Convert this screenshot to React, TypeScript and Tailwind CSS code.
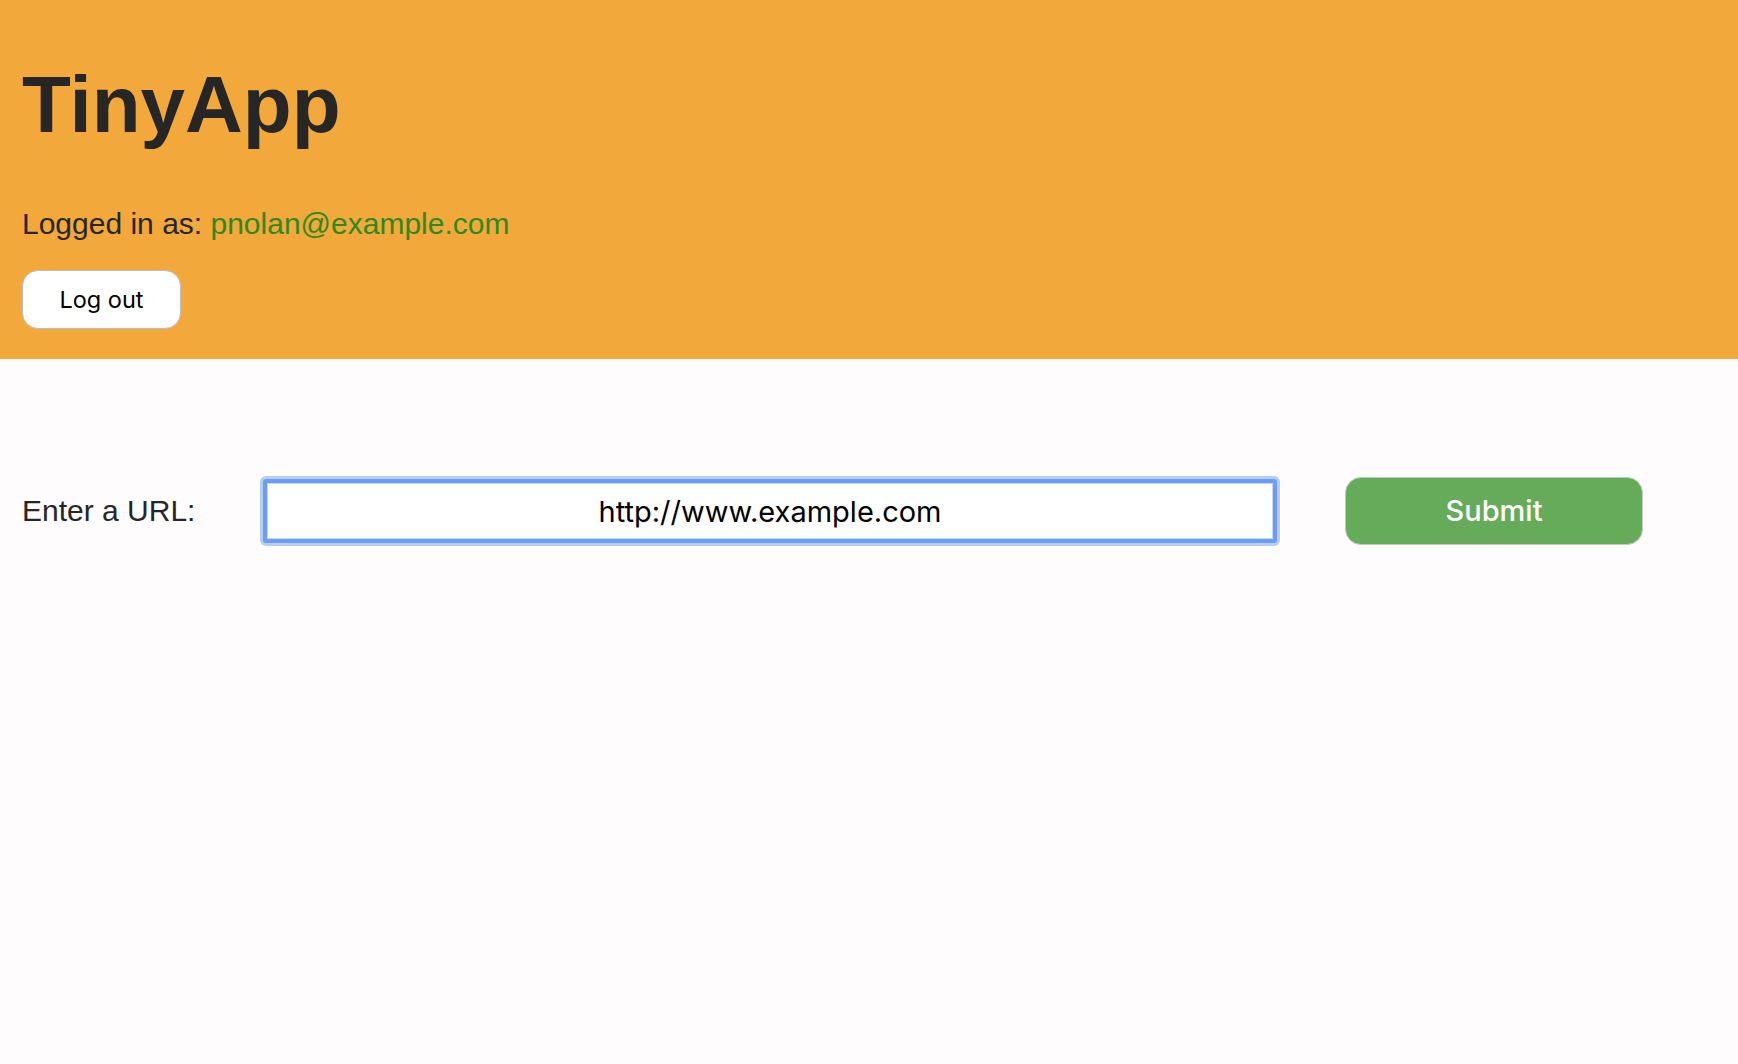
import React, { useEffect, useRef } from "react";

export default function App() {
  const ref = useRef<HTMLInputElement>(null);
  useEffect(() => {
    const el = ref.current;
    if (el) {
      el.focus();
      const n = el.value.length;
      el.setSelectionRange(n, n);
    }
  }, []);
  return (
    <div className="min-h-[1064px] w-full bg-[#fefcfc]">
      <header className="bg-[#f2a83b] pl-[22px] pt-[65px] pb-[30px] font-['Liberation_Sans',Arial,sans-serif] text-[#262626]">
        <h1 className="m-0 text-[80px] font-bold leading-[80px]">TinyApp</h1>
        <p className="mt-[63px] text-[30px] leading-[32px]">
          Logged in as: <span className="text-[#2f8a1e]">pnolan@example.com</span>
        </p>
        <button className="mt-[30px] flex h-[59px] w-[159px] items-center justify-center rounded-[16px] border-[1.5px] border-[#bdbdbd] bg-white font-['Inter',sans-serif] text-[23.5px] text-black">
          Log out
        </button>
      </header>
      <main className="pl-[22px] pt-[118px]">
        <form className="flex items-center" onSubmit={(e) => e.preventDefault()}>
          <label className="w-[241px] font-['Liberation_Sans',Arial,sans-serif] text-[30px] leading-[32px] text-[#262626]">
            Enter a URL:
          </label>
          <input
            ref={ref}
            type="text"
            defaultValue="http://www.example.com"
            className="h-[64px] w-[1014px] rounded-[3px] border-[4px] border-[#6e9cf0] bg-white text-center font-['Inter',sans-serif] text-[29px] text-black caret-black outline-none shadow-[0_0_0_3px_#b6cdf7,inset_0_0_0_1px_#c6d8f8]"
          />
          <button
            type="submit"
            className="ml-[68px] flex h-[68px] w-[298px] items-center justify-center rounded-[16px] border-[1.5px] border-[#c6c6c6] bg-[#66ab5a] font-['Inter',sans-serif] text-[29px] font-medium text-white"
          >
            Submit
          </button>
        </form>
      </main>
    </div>
  );
}
